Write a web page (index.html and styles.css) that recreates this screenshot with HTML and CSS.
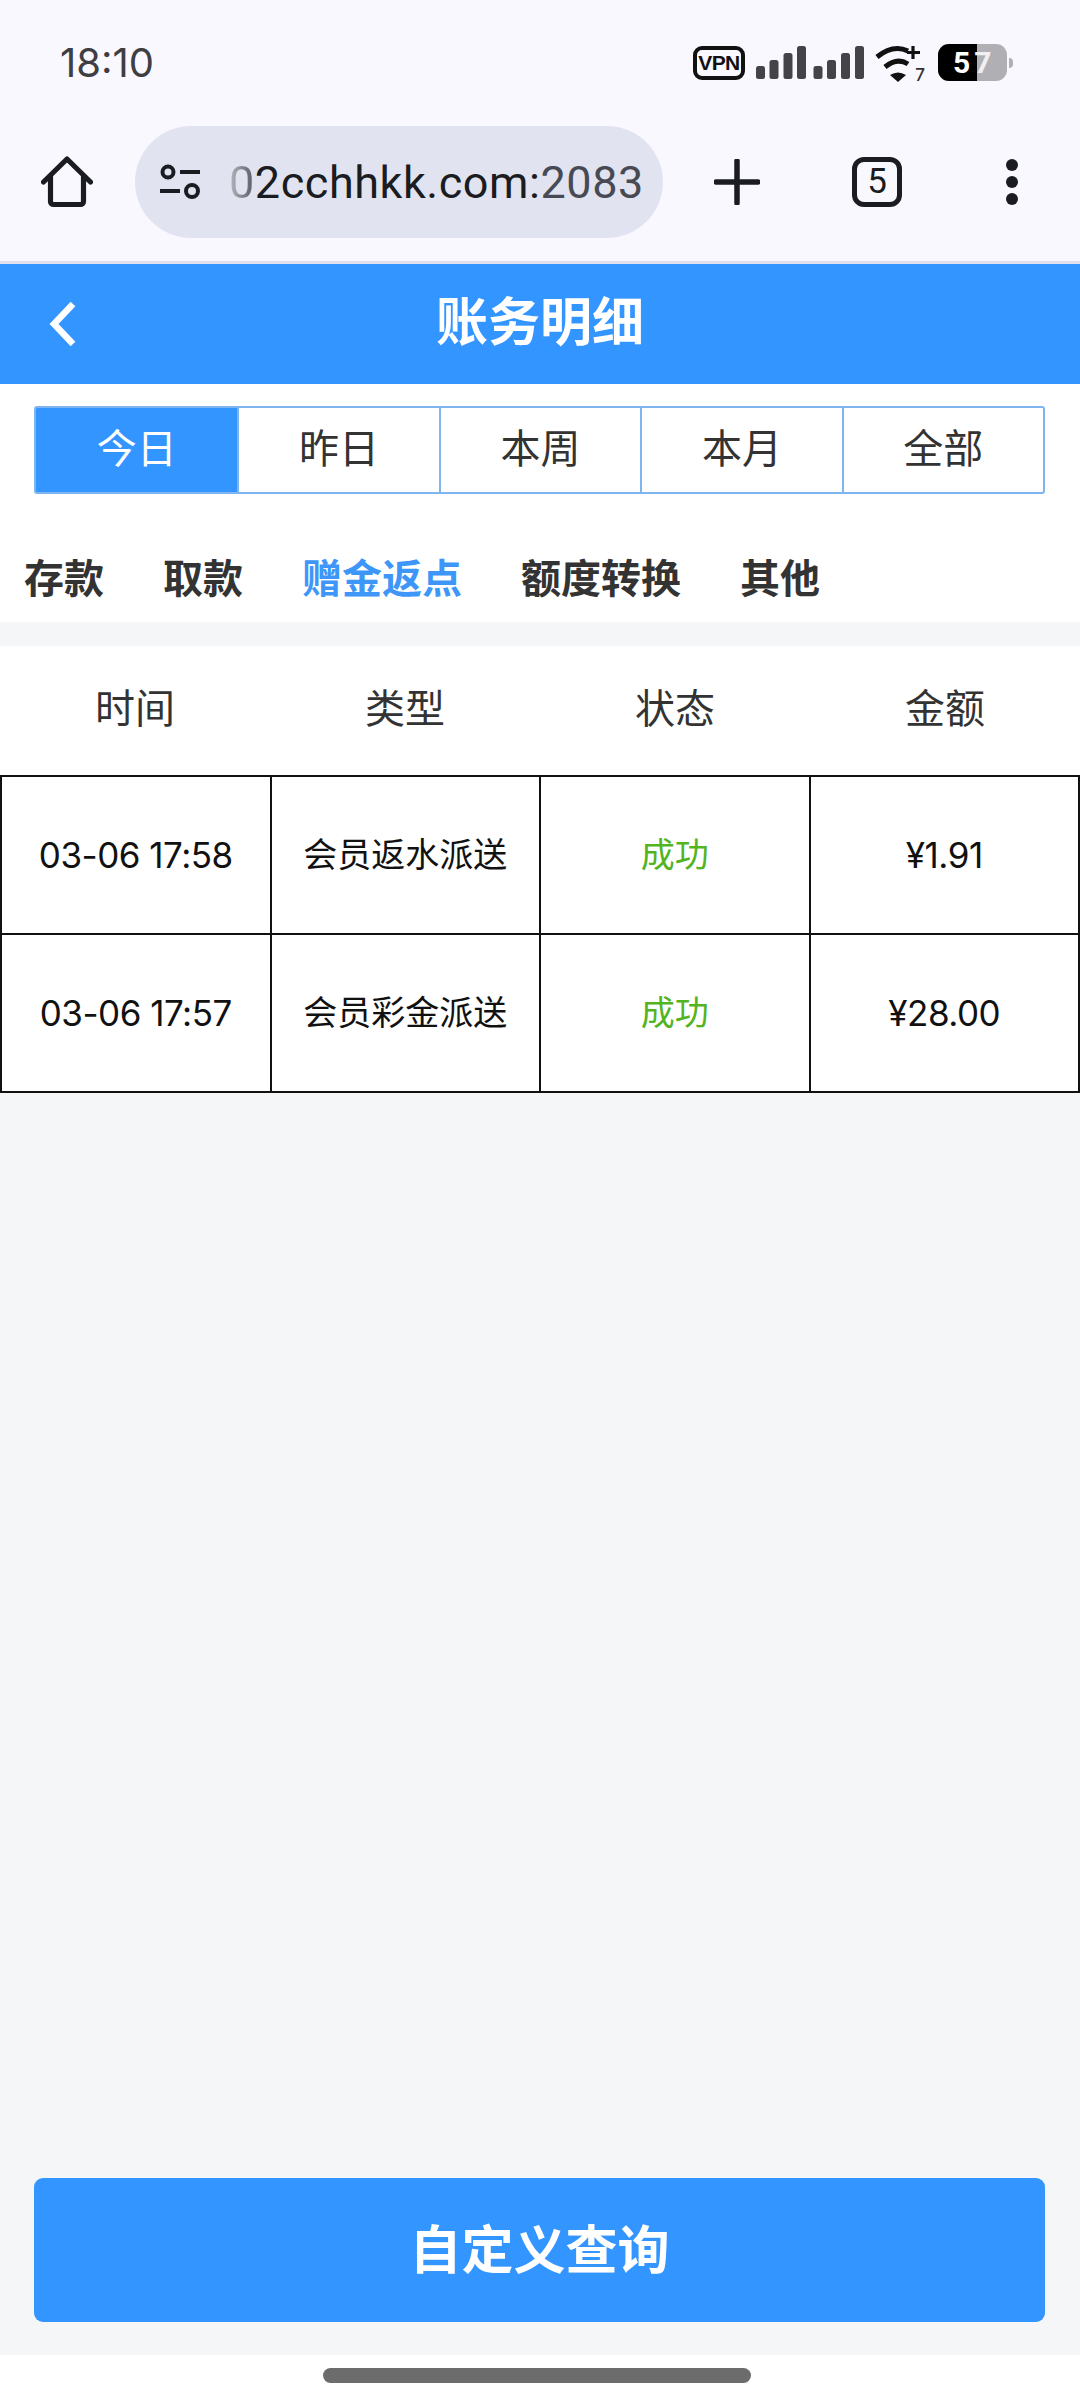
FILE: index.html
```html
<!DOCTYPE html>
<html lang="zh-CN">
<head>
<meta charset="utf-8">
<title>账务明细</title>
<link rel="stylesheet" href="styles.css">
</head>
<body>
<div class="phone">
  <div class="chrome">
    <div class="status">
      <span class="clock">18:10</span>
      <div class="status-icons">
        <span class="vpn">VPN</span>
        <svg class="signal" width="108" height="33" viewBox="0 0 108 33"><g fill="#444347"><rect x="0" y="20" width="9" height="13" rx="2.5"/><rect x="13.5" y="14" width="9" height="19" rx="2.5"/><rect x="27.5" y="7" width="9" height="26" rx="2.5"/><rect x="41" y="0" width="9" height="33" rx="2.5"/><rect x="57.5" y="20" width="9" height="13" rx="2.5"/><rect x="71" y="14" width="9" height="19" rx="2.5"/><rect x="85" y="7" width="9" height="26" rx="2.5"/><rect x="99" y="0" width="9" height="33" rx="2.5"/></g></svg>
        <span class="wifi-wrap">
          <svg width="50" height="38" viewBox="0 0 50 38"><g fill="none" stroke="#111" stroke-width="5"><path d="M2 11 Q18 -2 33 5"/><path d="M10 21 Q22 11 33 18"/></g><path d="M15 29 Q23 24 31 29 L23 36Z" fill="#111"/><path d="M38 0v13M32 6.500h13" stroke="#111" stroke-width="3.200" fill="none"/></svg>
          <span class="wifi-num">7</span>
        </span>
        <span class="battery"><span class="batt-fill"></span><span class="batt-text">5<span class="batt-seven">7</span></span></span>
        <span class="batt-tip"></span>
      </div>
    </div>
    <div class="toolbar">
      <svg class="home" width="52" height="54" viewBox="0 0 52 54"><path d="M2.500 27 26 4l23.500 23M9.500 21v25.500a3 3 0 0 0 3 3h27a3 3 0 0 0 3-3V21" fill="none" stroke="#1b1c21" stroke-width="5.200" stroke-linecap="round" stroke-linejoin="round"/></svg>
      <div class="omnibox">
        <svg class="tune" width="42" height="36" viewBox="0 0 42 36"><g fill="none" stroke="#1b1c21" stroke-width="4"><circle cx="9" cy="8" r="5.500"/><path d="M21 8h20M1 27h20"/><circle cx="33" cy="27" r="6"/></g></svg>
        <span class="url"><span class="url-fade">0</span>2cchhkk.com:<span class="url-port">2083</span></span>
      </div>
      <svg class="plus" width="46" height="46" viewBox="0 0 46 46"><path d="M23 2v42M2 23h42" stroke="#1b1c21" stroke-width="5.500" stroke-linecap="round"/></svg>
      <span class="tabs-count">5</span>
      <span class="dots"><i></i><i></i><i></i></span>
    </div>
  </div>

  <header class="titlebar">
    <svg class="back" width="30" height="44" viewBox="0 0 30 44"><path d="M27 2 8 22l19 20" fill="none" stroke="#fff" stroke-width="6.500" stroke-linejoin="miter"/></svg>
    <h1>账务明细</h1>
  </header>

  <main class="content">
    <div class="top-panel">
      <div class="segment">
        <span class="seg on">今日</span>
        <span class="seg">昨日</span>
        <span class="seg">本周</span>
        <span class="seg">本月</span>
        <span class="seg">全部</span>
      </div>
      <nav class="cats">
        <span>存款</span>
        <span>取款</span>
        <span class="cat-on">赠金返点</span>
        <span>额度转换</span>
        <span>其他</span>
      </nav>
    </div>
    <div class="thead">
      <span>时间</span><span>类型</span><span>状态</span><span>金额</span>
    </div>
    <div class="grid">
      <div class="cell">03-06 17:58</div>
      <div class="cell cjk">会员返水派送</div>
      <div class="cell ok">成功</div>
      <div class="cell">¥1.91</div>
      <div class="cell">03-06 17:57</div>
      <div class="cell cjk">会员彩金派送</div>
      <div class="cell ok">成功</div>
      <div class="cell">¥28.00</div>
    </div>
    <div class="spacer"></div>
    <button class="query">自定义查询</button>
  </main>
  <div class="gesture"><span class="pill"></span></div>
</div>
</body>
</html>
```
FILE: styles.css
```css
* { box-sizing: border-box; }
html, body { margin: 0; padding: 0; }
body { font-family: Roboto, "Noto Sans CJK SC", sans-serif; background: #fff; }
.phone { width: 1080px; height: 2400px; display: flex; flex-direction: column; overflow: hidden; }

.chrome { height: 264px; background: #faf8ff; flex: none; border-bottom: 3px solid #e0e0ee; }
.status { height: 126px; display: flex; justify-content: space-between; align-items: flex-start; padding: 41px 67px 0 60px; }
.clock { font-size: 40px; line-height: 44px; color: #3f3e43; font-family: Inter, Roboto, sans-serif; }
.status-icons { display: flex; align-items: flex-start; margin-top: 5px; }
.vpn { width: 52px; height: 34px; border: 4px solid #111; border-radius: 9px; font: 700 21px/26px "Liberation Sans", sans-serif; letter-spacing: -0.6px; color: #111; text-align: center; white-space: nowrap; }
.signal { margin-left: 11px; flex: none; }
.wifi-wrap { position: relative; width: 50px; height: 38px; margin-left: 11px; }
.wifi-num { position: absolute; right: 0; top: 19px; font: 500 17px/20px Inter, sans-serif; color: #333; }
.battery { position: relative; width: 69px; height: 37px; margin-left: 13px; margin-top: -2px; background: #b0afb3; border-radius: 11px; overflow: hidden; }
.batt-fill { position: absolute; left: 0; top: 0; bottom: 0; width: 39px; background: #000; }
.batt-text { position: absolute; left: 15px; top: 0; font: 700 30px/37px Roboto, sans-serif; color: #fff; letter-spacing: 4px; }
.batt-seven { color: #f0f0f2; }
.batt-tip { width: 4px; height: 10px; margin-top: 12px; margin-left: 2px; background: #b0afb3; border-radius: 0 4px 4px 0; }

.toolbar { height: 112px; display: flex; align-items: center; padding-left: 41px; }
.home { flex: none; }
.omnibox { width: 528px; height: 112px; margin-left: 42px; border-radius: 56px; background: #e1e4f0; display: flex; align-items: center; padding-left: 24px; overflow: hidden; flex: none; }
.tune { flex: none; margin-right: 31px; }
.url { font: 400 45px/52px Roboto, sans-serif; letter-spacing: 0.55px; color: #1b1c21; white-space: nowrap; margin: 2px 0 0 -3px; }
.url-fade { background: linear-gradient(90deg, #b8b9c0, #55575f); -webkit-background-clip: text; background-clip: text; color: transparent; }
.url-port { color: #474a54; }
.plus { margin-left: 51px; flex: none; }
.tabs-count { width: 50px; height: 50px; margin-left: 92px; border: 5px solid #1b1c21; border-radius: 12px; font: 400 35px/40px Roboto, sans-serif; text-align: center; color: #1b1c21; flex: none; }
.dots { margin-left: 104px; display: flex; flex-direction: column; gap: 5px; flex: none; }
.dots i { width: 12px; height: 12px; border-radius: 50%; background: #1b1c21; display: block; }

.titlebar { height: 120px; flex: none; background: #3395ff; position: relative; display: flex; align-items: center; justify-content: center; }
.titlebar h1 { margin: -10px 0 0; font: 700 52px/60px "Noto Sans CJK SC", sans-serif; color: #fff; }
.back { position: absolute; left: 46px; top: 38px; }

.content { flex: 1; background: #f4f6f8; display: flex; flex-direction: column; min-height: 0; }
.top-panel { background: #fff; height: 238px; flex: none; padding: 22px 34px 0 34px; }
.segment { height: 88px; width: 1011px; display: grid; grid-template-columns: repeat(5, 1fr); border: 2px solid #7fb5ee; border-radius: 3px; overflow: hidden; }
.seg { display: flex; align-items: center; justify-content: center; padding-bottom: 8px; font: 400 40px/1 "Noto Sans CJK SC", sans-serif; color: #333; border-left: 2px solid #7fb5ee; }
.seg:first-child { border-left: none; }
.seg.on { background: #3395ff; color: #fff; }
.cats { display: flex; gap: 59px; margin: 57px 0 0 -10px; font: 700 40px/50px "Noto Sans CJK SC", sans-serif; color: #333; }
.cat-on { color: #3e97f8; }

.thead { margin-top: 24px; height: 129px; flex: none; background: #fff; padding-bottom: 9px; display: grid; grid-template-columns: repeat(4, 1fr); align-items: center; text-align: center; font: 400 40px/1 "Noto Sans CJK SC", sans-serif; color: #333; }
.grid { flex: none; display: grid; grid-template-columns: repeat(4, 1fr); background: #fff; border-top: 2px solid #111; border-left: 2px solid #111; }
.cell { height: 158px; display: flex; align-items: center; justify-content: center; border-right: 2px solid #111; border-bottom: 2px solid #111; font: 400 35px/1 Inter, "Noto Sans CJK SC", sans-serif; letter-spacing: -0.5px; color: #111; }
.cell.cjk { font: 400 34px/1 "Noto Sans CJK SC", sans-serif; letter-spacing: 0; padding-bottom: 5px; }
.cell.ok { font: 400 34px/1 "Noto Sans CJK SC", sans-serif; letter-spacing: 0; color: #52b41e; padding-bottom: 5px; }
.spacer { flex: 1; }
.query { height: 144px; margin: 0 35px 33px 34px; padding: 0 0 7px; flex: none; border: none; border-radius: 9px; background: #3395ff; color: #fff; font: 700 52px/1 "Noto Sans CJK SC", sans-serif; }
.gesture { height: 45px; flex: none; background: #fff; display: flex; justify-content: center; padding-top: 13px; }
.pill { width: 428px; height: 15px; border-radius: 8px; background: #6c6c6c; display: block; margin-left: -6px; }
```
